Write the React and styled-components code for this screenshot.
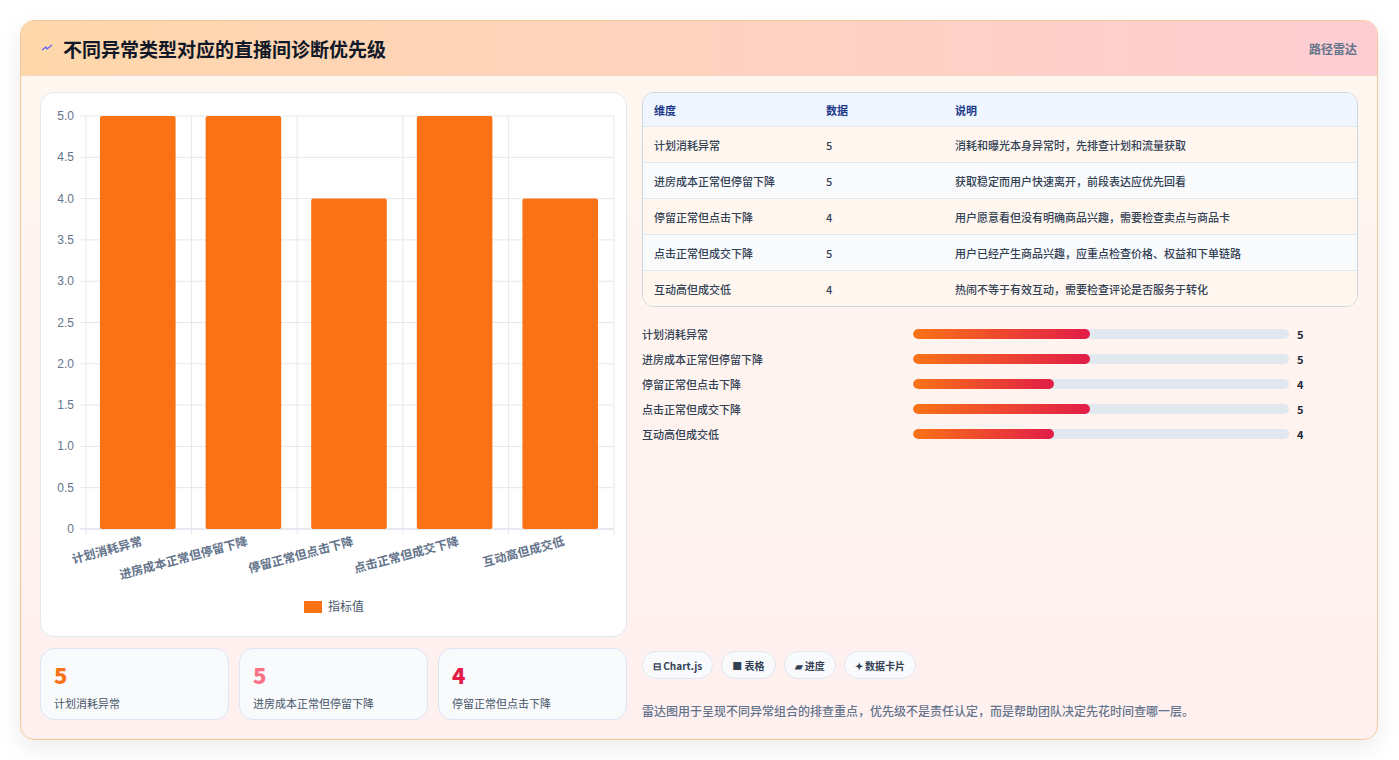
import React from "react";
import styled, { createGlobalStyle } from "styled-components";

const rows = [
  { name: "计划消耗异常", value: 5, note: "消耗和曝光本身异常时，先排查计划和流量获取" },
  { name: "进房成本正常但停留下降", value: 5, note: "获取稳定而用户快速离开，前段表达应优先回看" },
  { name: "停留正常但点击下降", value: 4, note: "用户愿意看但没有明确商品兴趣，需要检查卖点与商品卡" },
  { name: "点击正常但成交下降", value: 5, note: "用户已经产生商品兴趣，应重点检查价格、权益和下单链路" },
  { name: "互动高但成交低", value: 4, note: "热闹不等于有效互动，需要检查评论是否服务于转化" },
];

const Global = createGlobalStyle`
  body { margin: 0; background: #fff; font-family: "Noto Sans CJK SC", "Noto Sans", sans-serif; }
`;

const Page = styled.div`
  padding: 20px 21px 20px 20px;
`;

const Card = styled.div`
  border: 1px solid #f5c89a;
  border-radius: 14px;
  overflow: hidden;
  background: linear-gradient(180deg, #fff7ef, #fff0f0);
  box-shadow: 0 8px 24px rgba(0, 0, 0, 0.08);
  height: 718px;
  display: flex;
  flex-direction: column;
`;

const Header = styled.div`
  height: 54px;
  display: flex;
  align-items: center;
  justify-content: space-between;
  padding: 0 20px;
  background: linear-gradient(90deg, #fed7aa, #fecdd3);
  border-bottom: 1px solid #f8d8c0;
  h1 {
    margin: 0;
    font-size: 19px;
    font-weight: 700;
    color: #111827;
    display: flex;
    align-items: center;
    gap: 10px;
  }
  span { font-size: 12px; color: #64748b; font-weight: 600; }
`;

const Body = styled.div`
  flex: 1;
  display: grid;
  grid-template-columns: 587px 1fr;
  gap: 15px;
  padding: 16px 19px 18px 19px;
`;

const Col = styled.div`
  display: flex;
  flex-direction: column;
  gap: 11px;
  min-height: 0;
`;

const ChartBox = styled.div`
  height: 543px;
  background: #fff;
  border: 1px solid #e2e8f0;
  border-radius: 14px;
`;

const Stats = styled.div`
  display: grid;
  grid-template-columns: repeat(3, 1fr);
  gap: 10px;
`;

const Stat = styled.div`
  height: 72px;
  box-sizing: border-box;
  background: #f8fafc;
  border: 1px solid #dbe5f3;
  border-radius: 14px;
  padding: 12px 13px;
  b { display: block; font-size: 22px; line-height: 26px; color: ${(p) => p.$c}; font-weight: 800; }
  div { font-size: 11px; color: #475569; margin-top: 8px; }
`;

const Table = styled.div`
  border: 1px solid #cbd5e1;
  border-radius: 12px;
  overflow: hidden;
`;

const Tr = styled.div`
  display: grid;
  grid-template-columns: 172px 129px 1fr;
  height: ${(p) => (p.$head ? 33 : 35)}px;
  align-items: center;
  padding: 0 11px;
  font-size: 11px;
  color: ${(p) => (p.$head ? "#1e3a8a" : "#334155")};
  font-weight: ${(p) => (p.$head ? 700 : 500)};
  background: ${(p) => (p.$head ? "#eff6ff" : p.$odd ? "#fff7ef" : "#f8fafc")};
  border-top: ${(p) => (p.$head ? "none" : "1px solid #e2e8f0")};
`;

const Bars = styled.div`
  display: flex;
  flex-direction: column;
  gap: 9px;
  margin-top: 8px;
`;

const BarRow = styled.div`
  display: grid;
  grid-template-columns: 271px 376px 1fr;
  align-items: center;
  font-size: 11px;
  color: #334155;
  font-weight: 500;
  height: 16px;
  b { padding-left: 8px; color: #1e293b; font-size: 11px; }
`;

const Track = styled.div`
  height: 10px;
  background: #e2e8f0;
  border-radius: 5px;
  overflow: hidden;
`;

const Fill = styled.div`
  height: 100%;
  border-radius: 5px;
  background: linear-gradient(90deg, #f97316, #e11d48);
`;

const Spacer = styled.div`flex: 1;`;

const Chips = styled.div`
  display: flex;
  gap: 8px;
`;

const Chip = styled.div`
  height: 26px;
  padding: 0 10px;
  border-radius: 14px;
  background: #f8fafc;
  border: 1px solid #e2e8f0;
  font-size: 10px;
  font-weight: 700;
  color: #334155;
  display: flex;
  align-items: center;
  gap: 3px;
`;

const Note = styled.p`
  margin: 12px 0 2px;
  font-size: 12px;
  color: #64748b;
  font-weight: 500;
`;

function Chart() {
  const x0 = 45, x1 = 573, y0 = 23, y1 = 436;
  const cw = (x1 - x0) / 5;
  const ticks = [5, 4.5, 4, 3.5, 3, 2.5, 2, 1.5, 1, 0.5, 0];
  const yOf = (v) => y1 - (v / 5) * (y1 - y0);
  return (
    <svg width="585" height="541" style={{ display: "block" }}>
      {ticks.map((t) => (
        <g key={t}>
          <line x1={x0 - 6} x2={x1} y1={yOf(t)} y2={yOf(t)} stroke={t === 0 ? "#cbd5e1" : "#e5e7eb"} />
          <text x={x0 - 12} y={yOf(t) + 4} fontSize="12" fill="#64748b" textAnchor="end" fontFamily="Liberation Sans, sans-serif">
            {t === 0 ? "0" : t.toFixed(1)}
          </text>
        </g>
      ))}
      {[0, 1, 2, 3, 4, 5].map((i) => (
        <line key={i} x1={x0 + i * cw} x2={x0 + i * cw} y1={y0} y2={y1 + 6} stroke="#e5e7eb" />
      ))}
      {rows.map((r, i) => (
        <g key={r.name}>
          <rect x={x0 + i * cw + 14} y={yOf(r.value)} width={cw - 30} height={y1 - yOf(r.value)} rx="2" fill="#f97316" />
          <text
            transform={`translate(${x0 + i * cw + cw / 2 + 4},${y1 + 16}) rotate(-15)`}
            textAnchor="end"
            fontSize="12"
            fontWeight="700"
            fill="#64748b"
          >
            {r.name}
          </text>
        </g>
      ))}
      <rect x="263" y="508" width="18" height="12" fill="#f97316" />
      <text x="287" y="518" fontSize="12" fill="#475569">指标值</text>
    </svg>
  );
}

export default function App() {
  return (
    <Page>
      <Global />
      <Card>
        <Header>
          <h1>
            <svg width="12" height="10" viewBox="0 0 12 10">
              <path d="M1 7 L5 4 L6 6 L11 2" stroke="#6366f1" strokeWidth="1.4" fill="none" />
            </svg>
            不同异常类型对应的直播间诊断优先级
          </h1>
          <span>路径雷达</span>
        </Header>
        <Body>
          <Col>
            <ChartBox>
              <Chart />
            </ChartBox>
            <Stats>
              <Stat $c="#f97316"><b>5</b><div>计划消耗异常</div></Stat>
              <Stat $c="#fb7185"><b>5</b><div>进房成本正常但停留下降</div></Stat>
              <Stat $c="#e11d48"><b>4</b><div>停留正常但点击下降</div></Stat>
            </Stats>
          </Col>
          <Col>
            <Table>
              <Tr $head><span>维度</span><span>数据</span><span>说明</span></Tr>
              {rows.map((r, i) => (
                <Tr key={r.name} $odd={i % 2 === 0}>
                  <span>{r.name}</span><span>{r.value}</span><span>{r.note}</span>
                </Tr>
              ))}
            </Table>
            <Bars>
              {rows.map((r) => (
                <BarRow key={r.name}>
                  <span>{r.name}</span>
                  <Track><Fill style={{ width: `${r.value * 9.4}%` }} /></Track>
                  <b>{r.value}</b>
                </BarRow>
              ))}
            </Bars>
            <Spacer />
            <Chips>
              <Chip>⊟ Chart.js</Chip>
              <Chip>■ 表格</Chip>
              <Chip>▰ 进度</Chip>
              <Chip>✦ 数据卡片</Chip>
            </Chips>
            <Note>雷达图用于呈现不同异常组合的排查重点，优先级不是责任认定，而是帮助团队决定先花时间查哪一层。</Note>
          </Col>
        </Body>
      </Card>
    </Page>
  );
}
